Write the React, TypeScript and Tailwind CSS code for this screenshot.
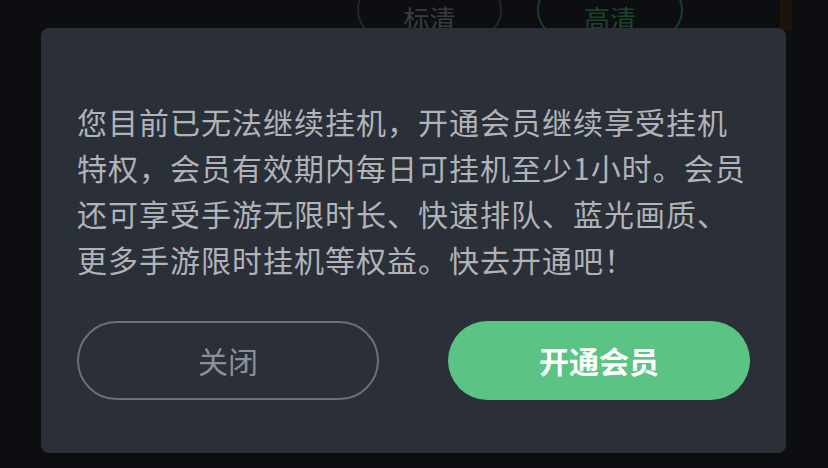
export default function App() {
  const lines = [
    "您目前已无法继续挂机，开通会员继续享受挂机",
    "特权，会员有效期内每日可挂机至少1小时。会员",
    "还可享受手游无限时长、快速排队、蓝光画质、",
    "更多手游限时挂机等权益。快去开通吧！",
  ];

  return (
    <div
      className="relative w-[828px] h-[468px] overflow-hidden bg-[#0d0e11]"
      style={{ fontFamily: '"Noto Sans CJK SC", "Noto Sans", sans-serif' }}
    >
      {/* faded quality switch behind the overlay */}
      <div className="absolute left-[357px] top-[-19px] flex gap-[35px]">
        <div className="w-[145px] h-[58px] rounded-full border-2 border-[#24262b] flex items-end justify-center text-[26px] text-[#393b40]">
          标清
        </div>
        <div className="w-[146px] h-[58px] rounded-full border-2 border-[#17402a] flex items-end justify-center text-[26px] text-[#1c442c]">
          高清
        </div>
      </div>
      <div className="absolute left-[780px] top-0 w-[12px] h-[30px] bg-[#1c130b]" />

      {/* dialog */}
      <div className="absolute left-[41px] top-[28px] w-[745px] h-[425px] rounded-[8px] bg-[#2a2f38] px-[36px] pt-[70px]">
        <div className="text-[30px] leading-[46px] tracking-[1px] text-[#b0b3b8]">
          {lines.map((l) => (
            <div key={l} className="whitespace-nowrap">
              {l}
            </div>
          ))}
        </div>
        <div className="mt-[39px] flex justify-between">
          <button
            type="button"
            className="w-[302px] h-[79px] rounded-full border-2 border-[#6c7078] text-[30px] text-[#8c9096]"
          >
            关闭
          </button>
          <button
            type="button"
            className="w-[302px] h-[79px] rounded-full bg-[#5bc485] text-[30px] font-bold text-white"
          >
            开通会员
          </button>
        </div>
      </div>
    </div>
  );
}
